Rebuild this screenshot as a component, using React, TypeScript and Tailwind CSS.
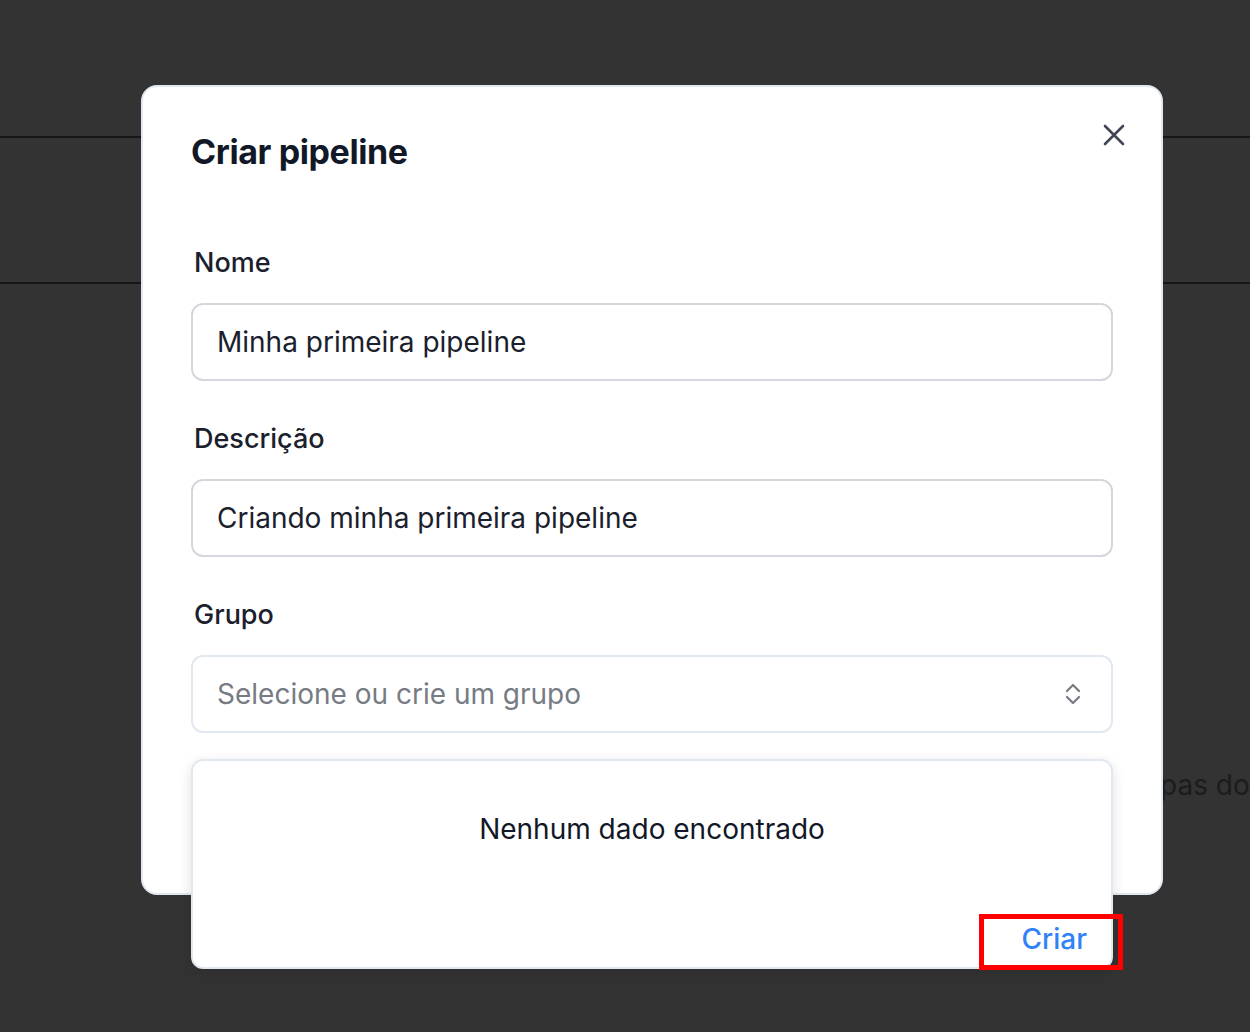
import React from 'react';

const CloseIcon = () => (
  <svg width="22" height="22" viewBox="0 0 22 22" fill="none" stroke="#3f4654" strokeWidth="2.6" strokeLinecap="round">
    <path d="M2 2L20 20M20 2L2 20" />
  </svg>
);

const UpDownIcon = () => (
  <svg width="16" height="22" viewBox="0 0 16 22" fill="none" stroke="#767b84" strokeWidth="2.2" strokeLinecap="round" strokeLinejoin="round">
    <path d="M2 8L8 2L14 8" />
    <path d="M2 14L8 20L14 14" />
  </svg>
);

const Field: React.FC<{ label: string; value: string }> = ({ label, value }) => (
  <div className="flex flex-col">
    <label className="ml-[3px] h-[32px] leading-[32px] text-[27px] font-medium text-[#1a202c]">{label}</label>
    <div className="mt-[24px] h-[78px] rounded-[12px] border-2 border-[#d4d7dc] flex items-center px-[24px] text-[28px] text-[#1a202c]">
      {value}
    </div>
  </div>
);

export default function App() {
  return (
    <div className="relative w-[1250px] h-[1032px] overflow-hidden bg-[#333333] font-['Inter',sans-serif]">
      {/* page behind the overlay */}
      <div className="flex flex-col pt-[136px]">
        <div className="h-[148px] border-t-2 border-b-2 border-[#161618]" />
        <div className="mt-[485px] pl-[1160px] whitespace-nowrap h-[32px] leading-[32px] text-[28px] text-[#1c1c1c]">
          pas do
        </div>
      </div>

      {/* modal */}
      <div className="absolute left-[141px] top-[85px] w-[1022px] h-[810px] bg-white rounded-[16px] border-2 border-[#e2e8f0] px-[48px]">
        <div className="flex items-start justify-between pt-[45px]">
          <h2 className="h-[40px] leading-[40px] text-[34px] font-bold tracking-[-0.4px] text-[#111827]">Criar pipeline</h2>
          <button className="mt-[-8px] mr-[-12px]">
            <CloseIcon />
          </button>
        </div>

        <div className="mt-[75px] flex flex-col gap-[42px]">
          <Field label="Nome" value="Minha primeira pipeline" />
          <Field label="Descrição" value="Criando minha primeira pipeline" />

          <div className="flex flex-col">
            <label className="ml-[3px] h-[32px] leading-[32px] text-[27px] font-medium text-[#1a202c]">Grupo</label>
            <div className="relative mt-[24px]">
              <div className="h-[78px] rounded-[12px] border-2 border-[#e2e8f0] flex items-center justify-between pl-[24px] pr-[30px] text-[28px] text-[#767b84]">
                <span>Selecione ou crie um grupo</span>
                <UpDownIcon />
              </div>

              {/* dropdown */}
              <div className="absolute left-0 right-0 top-[104px] h-[210px] bg-white rounded-[12px] border-2 border-[#e2e8f0] shadow-[0_4px_14px_rgba(0,0,0,0.12)] flex flex-col">
                <div className="pt-[52px] h-[32px] leading-[32px] text-center text-[28px] text-[#111827] box-content">
                  Nenhum dado encontrado
                </div>
                <div className="mt-auto mb-[12px] flex justify-end pr-[24px]">
                  <button className="h-[32px] leading-[32px] text-[28px] font-medium text-[#3182f6]">Criar</button>
                </div>
              </div>
              {/* highlight box */}
              <div className="absolute left-[788px] top-[259px] w-[144px] h-[56px] border-[5px] border-[#ff0000]" />
            </div>
          </div>
        </div>
      </div>
    </div>
  );
}
